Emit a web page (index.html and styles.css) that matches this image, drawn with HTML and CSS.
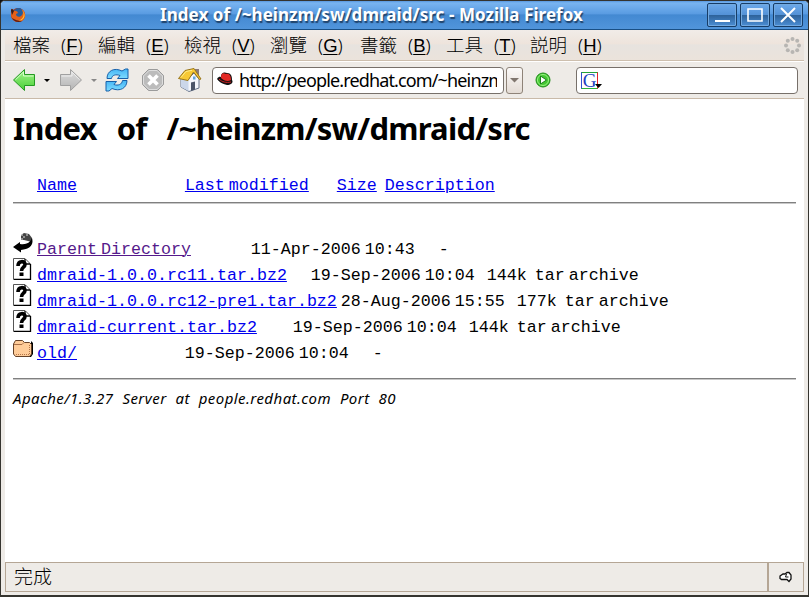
FILE: index.html
```html
<!DOCTYPE html>
<html lang="zh-Hant">
<head>
<meta charset="utf-8">
<title>Index of /~heinzm/sw/dmraid/src - Mozilla Firefox</title>
<link rel="stylesheet" href="styles.css">
</head>
<body>
<svg width="0" height="0" class="defs">
  <defs>
    <linearGradient id="green" x1="0" y1="0" x2="0" y2="1"><stop offset="0" stop-color="#a5f58c"/><stop offset="1" stop-color="#48cf36"/></linearGradient>
    <linearGradient id="grey" x1="0" y1="0" x2="0" y2="1"><stop offset="0" stop-color="#dedede"/><stop offset="1" stop-color="#b4b4b4"/></linearGradient>
    <linearGradient id="blue" x1="0" y1="0" x2="0" y2="1"><stop offset="0" stop-color="#45b5f5"/><stop offset="1" stop-color="#7fdcff"/></linearGradient>
    <symbol id="unknown" viewBox="0 0 20 22">
      <path d="M.5 .5H12L17.500 6V21.500H.5Z" fill="#fff" stroke="#555"/>
      <path d="M17.500 6V21.500H1M12 1V6H17" fill="none" stroke="#000" stroke-width="1.300"/>
      <path d="M5 8C5 2.500 12 2.500 12 6.500C12 9.500 8.500 9 8.500 13" fill="none" stroke="#000" stroke-width="3.600"/>
      <path d="M6.500 14.500h4v3.500h-4z"/>
    </symbol>
  </defs>
</svg>
<div class="window">
  <header class="titlebar">
    <svg class="app-icon" width="16" height="16" viewBox="0 0 16 16"><circle cx="8" cy="8" r="7" fill="#b83210"/><circle cx="8.500" cy="6" r="5" fill="#245d9c"/><path d="M1 4C1 0 3 2 4 4C6 3 8 5 8 6L6 7C6 10 10 11 12 8C14 5 12 3 11 2C17 4 16 12 12 14C7 17 0 13 1 4Z" fill="#e4601a"/><path d="M12 3C15 7 14 12 8 14C14 14 17 8 12 3Z" fill="#ffc435"/><path d="M1 4C1 1 3 2 4 4L2 8Z" fill="#351b1b"/><path d="M2 11C4 15 9 16 12 14C8 14 5 13 2 11Z" fill="#5b1c16"/></svg>
    <div class="caption">Index of /~heinzm/sw/dmraid/src - Mozilla Firefox</div>
    <div class="controls">
      <span class="control"><svg width="28" height="22"><path d="M7 17H22" stroke="#fff" stroke-width="2"/></svg></span>
      <span class="control"><svg width="28" height="22"><path d="M7 5H21V17H7Z" fill="none" stroke="#fff" stroke-width="1.600"/></svg></span>
      <span class="control"><svg width="28" height="22"><path d="M7 4L21 18M21 4L7 18" stroke="#fff" stroke-width="2"/></svg></span>
    </div>
  </header>
  <nav class="menubar">
    <span class="menu">檔案<span class="key">(<u>F</u>)</span></span>
    <span class="menu">編輯<span class="key">(<u>E</u>)</span></span>
    <span class="menu">檢視<span class="key">(<u>V</u>)</span></span>
    <span class="menu wide">瀏覽<span class="key">(<u>G</u>)</span></span>
    <span class="menu">書籤<span class="key">(<u>B</u>)</span></span>
    <span class="menu narrow">工具<span class="key">(<u>T</u>)</span></span>
    <span class="menu">説明<span class="key">(<u>H</u>)</span></span>
    <svg class="throbber" width="17" height="17" viewBox="0 0 17 17" fill="#b7b5b2"><circle cx="8.500" cy="2" r="2"/><circle cx="13.200" cy="3.800" r="2"/><circle cx="15" cy="8.500" r="2"/><circle cx="13.200" cy="13.200" r="2"/><circle cx="8.500" cy="15" r="2"/><circle cx="3.800" cy="13.200" r="2"/><circle cx="2" cy="8.500" r="2"/><circle cx="3.800" cy="3.800" r="2"/></svg>
  </nav>
  <div class="toolbar">
    <svg width="92" height="26" viewBox="0 0 92 26">
      <path d="M1.500 13L12.500 2.500V7.500H22.500V18.500H12.500V23.500Z" fill="url(#green)" stroke="#249a22"/>
      <path d="M3.500 12.700L11.500 5V9H21.500" fill="none" stroke="#d6ffca"/>
      <path d="M32 12h6l-3 3z"/>
      <path d="M69.500 13L58.500 2.500V7.500H48.500V18.500H58.500V23.500Z" fill="url(#grey)" stroke="#a0a0a0"/>
      <path d="M49.500 9H60V5L67.500 12.700" fill="none" stroke="#eee"/>
      <path d="M79 12h6l-3 3z" fill="#888"/>
    </svg>
    <svg class="reload" width="24" height="26" viewBox="0 0 24 26"><g fill="url(#blue)" stroke="#1760aa"><path d="M2 11.500C2 4 9 0 17 4L20.500 2L23 2V11.500H12.500L15 8.500C11 7 7 8 6.500 11.500Z"/><path d="M22 13.500C22 21 15 25 7 21.500L4 24L1 24V14.500H11.500L9 17.500C13 19 17 17.500 17.500 13.500Z"/></g></svg>
    <svg class="stop" width="24" height="26" viewBox="0 0 24 26"><path d="M7.500 2.500H16.500L22.500 8.500V17.500L16.500 23.500H7.500L1.500 17.500V8.500Z" fill="#bcbcbc" stroke="#9b9b9b"/><path d="M8 3.500H16L21.500 9V17L16 22.500H8L2.500 17V9Z" fill="none" stroke="#dedede"/><path d="M7.500 8.500L16.500 17.500M16.500 8.500L7.500 17.500" stroke="#fff" stroke-width="3.600"/></svg>
    <svg class="home" width="25" height="26" viewBox="0 0 25 26"><path d="M4 12L11 12L17 6L22 12V21L12 24.500L4 20Z" fill="#f3f5fa" stroke="#66738a"/><path d="M11.500 13V24L4 20V12Z" fill="#cbd7ea"/><path d="M14 15.500L18 14.500V22.500L14 24Z" fill="#4b5468"/><path d="M16 9.500h2.500v3H16z" fill="#63a5dc"/><path d="M18 2h4v7l-4-4z" fill="#8b7a79"/><path d="M1.500 11.500L8 3.500L17 1.500L24 12L22.500 12.500L16.500 5L11 13.500Z" fill="#f7c935" stroke="#98751a"/><path d="M4 10.500L9 4.500L15 3.300" stroke="#ffed8c" fill="none"/></svg>
    <div class="address">
      <svg width="17" height="16" viewBox="0 0 17 16"><path d="M0 7C2 4 3 5 4 5C4 0 8 0 10 1C15 1 15 6 15 8C17 11 13 13 10 13C5 12 2 10 0 7Z" fill="#131010"/><path d="M4 6C4 0 7 1 9 2C13 1 14 5 14 8C11 10 7 9 4 6Z" fill="#e32925"/><path d="M2 7C5 10 9 11 14 10" stroke="#d32022" fill="none"/></svg>
      <span>http://people.redhat.com/~heinzm</span>
    </div>
    <div class="drop"><svg width="10" height="6"><path d="M0 1h9L4.500 5.500z" fill="#80766e"/></svg></div>
    <svg class="go" width="16" height="16" viewBox="0 0 16 16"><circle cx="8" cy="8" r="7" fill="#43c832" stroke="#218c1b"/><circle cx="8" cy="8" r="5.500" fill="none" stroke="#9af184"/><path d="M5.500 4V12L11.500 8Z" fill="#fff" stroke="#1b811a"/></svg>
    <div class="search"><span class="engine">G</span><svg class="engine-arrow" width="8" height="5"><path d="M0 0h7L3.500 4z"/></svg></div>
  </div>
  <main class="page">
    <h1><span>Index</span> <span>of</span> <span>/~heinzm/sw/dmraid/src</span></h1>
    <div class="row head"><span class="icon"></span><pre><a href="#">Name</a>                           <a href="#">Last modified</a>       <a href="#">Size</a>  <a href="#">Description</a></pre></div>
    <hr>
    <div class="list">
      <div class="row"><svg class="icon" viewBox="0 0 20 22"><path d="M8 3L11 1L16 2L19 6L19 10L11 8L8 8Z" fill="#444"/><path d="M8 3h2M10 5h2M8 7h2M13 3h2" stroke="#ddd"/><path d="M0 15L7 10V12C13 13 17 11 19 6C21 13 17 17 8 18V20.500Z"/></svg><pre><a class="visited" href="#">Parent Directory</a>               11-Apr-2006 10:43      -</pre></div>
      <div class="row"><svg class="icon"><use href="#unknown"/></svg><pre><a href="#">dmraid-1.0.0.rc11.tar.bz2</a>      19-Sep-2006 10:04   144k  tar archive</pre></div>
      <div class="row"><svg class="icon"><use href="#unknown"/></svg><pre><a href="#">dmraid-1.0.0.rc12-pre1.tar.bz2</a> 28-Aug-2006 15:55   177k  tar archive</pre></div>
      <div class="row"><svg class="icon"><use href="#unknown"/></svg><pre><a href="#">dmraid-current.tar.bz2</a>         19-Sep-2006 10:04   144k  tar archive</pre></div>
      <div class="row"><svg class="icon" viewBox="0 0 20 22"><path d="M3 21H18L20 18V7L18 5V18L16 20Z"/><path d="M.5 8L2.500 4.500H9.500L11.500 6.500H16.500L18.500 8.500V18L16.500 20.500H2.500L.5 18Z" fill="#fc9" stroke="#654128"/><path d="M1 8.500H9L11 6.500" fill="none" stroke="#a96f46"/><path d="M3 18.500H16.500V9" fill="none" stroke="#b57548" stroke-dasharray="1 1"/></svg><pre><a href="#">old/</a>                           19-Sep-2006 10:04      -</pre></div>
    </div>
    <hr>
    <address>Apache/1.3.27 Server at people.redhat.com Port 80</address>
  </main>
  <footer class="status">
    <div class="message">完成</div>
    <div class="indicator"><svg width="13" height="12" viewBox="0 0 13 12"><path d="M1 5L4 3H6L8 1.500H10L12 4V8L10 10.500L8 8.500H2.500L1 7.500Z" fill="#fff" stroke="#111" stroke-width="1.300"/><path d="M7.500 3L6.500 6H9.500" fill="none" stroke="#111"/></svg></div>
  </footer>
</div>
</body>
</html>
```

FILE: styles.css
```css
* { box-sizing: border-box; }
html, body { margin: 0; }
body { width: 809px; height: 597px; overflow: hidden; background: #111; }
.defs { position: absolute; }
svg { display: block; flex: none; }

.window {
  display: flex; flex-direction: column;
  width: 809px; height: 597px;
  border: solid #35342f; border-width: 1px 1px 2px 1px;
  border-radius: 5px 5px 0 0;
  background: #eeebe7;
  font-family: "Noto Sans", "Noto Sans CJK TC", sans-serif;
  overflow: hidden;
}

.titlebar {
  display: flex; align-items: center; flex: none;
  height: 29px; padding: 0 5px 0 9px;
  border-bottom: 1px solid #194f85;
  background: linear-gradient(#5797df 0, #79b4f0 7%, #5a9ce2 45%, #4389d2 50%, #5195db 100%);
}
.caption {
  flex: 1; padding-left: 134px;
  color: #fff; font-size: 17px; font-weight: 700; line-height: 30px; letter-spacing: .06px;
  text-shadow: 1px 2px 1px #20436b; white-space: nowrap;
}
.controls { display: flex; gap: 3px; }
.control {
  width: 30px; height: 24px; border: 1px solid #173d67; border-radius: 2px;
  background: linear-gradient(#6ca9ea 0, #5492d7 48%, #2d6198 50%, #4b8ed5 100%);
  box-shadow: inset 0 0 0 1px #72a9e0;
}

.menubar {
  display: flex; align-items: center; flex: none;
  height: 31px; margin: 0 4px; padding-left: 8px;
  border-bottom: 1px solid #cdbfae;
  background: linear-gradient(#f1ece8 0, #eee4dc 45%, #e7e3df 50%, #ebe3db 100%);
  font-size: 18.500px; font-weight: 300;
}
.menu { display: flex; width: 86px; line-height: 30px; white-space: nowrap; }
.menu:first-child { width: 85px; }
.menu.wide { width: 90px; }
.menu.narrow { width: 84px; }
.key { margin-left: 11px; }
.key u { font-family: "Liberation Sans", sans-serif; font-weight: 400; text-underline-offset: 2px; }
.throbber { margin: 0 3px 0 auto; }

.toolbar {
  display: flex; align-items: center; flex: none;
  height: 38px; margin: 0 4px; padding-left: 7px;
  border-top: 1px solid #fff; border-bottom: 1px solid #c9baa9;
}
.reload { margin-left: 1px; }
.stop { margin-left: 12px; }
.home { margin-left: 12px; }
.address {
  display: flex; align-items: center; gap: 5px;
  width: 292px; height: 27px; margin-left: 10px; padding: 0 6px 0 4px;
  border: 1px solid #77706a; border-radius: 4px; background: #fff;
  font-size: 18px; letter-spacing: -.86px; white-space: nowrap;
}
.address span { flex: 1; min-width: 0; overflow: hidden; line-height: 25px; }
.drop {
  display: grid; place-items: center;
  width: 17px; height: 27px; margin-left: 2px;
  border: 1px solid #8e8378; border-radius: 3px;
  background: linear-gradient(#fbf9f8, #e4dcd5);
}
.go { margin-left: 12px; }
.search {
  display: flex; align-items: center;
  width: 222px; height: 27px; margin-left: 25px; padding-left: 4px;
  border: 1px solid #77706a; border-radius: 4px; background: #fff;
}
.engine {
  width: 17px; height: 17px; border: 1px solid;
  border-color: #24a138 #e6232a #2bb03c #3151d0;
  color: #1c3fc0; font: 19px/15px "Liberation Serif", serif; text-align: center;
}
.engine-arrow { margin: 12px 0 0 -3px; }

.page { flex: 1; min-height: 0; margin: 0 4px; padding: 0 8px; background: #fff; }
h1 {
  display: flex; gap: 20px;
  height: 69px; margin: 0; padding-top: 8px;
  font-size: 31px; line-height: 43px; letter-spacing: -.77px; white-space: nowrap;
}
.row { display: flex; height: 26px; }
.icon { flex: none; width: 20px; height: 22px; margin-right: 4px; }
pre {
  margin: 0; padding-top: 7px;
  font: 16.660px/21px "Liberation Mono", monospace; word-spacing: -6px;
}
a { color: #0000ee; text-decoration-thickness: 1px; }
.visited { color: #551a8b; }
hr { height: 2px; margin: 7px 0 0; border: 0; border-top: 1px solid #808080; border-bottom: 1px solid #c8c8c8; }
.head + hr { margin-top: 8px; }
.list { margin: 28px 0 16px; }
address { margin-top: 8px; font-size: 15px; line-height: 21px; letter-spacing: .45px; word-spacing: 4.500px; white-space: nowrap; }

.status {
  display: flex; flex: none;
  height: 30px; margin: 0 4px 3px;
  border: 1px solid #b5a695;
  font-size: 19px; font-weight: 300; line-height: 28px;
}
.message { flex: 1; padding-left: 8px; }
.indicator { display: grid; place-items: center; width: 36px; padding-right: 2px; border-left: 2px solid #b5a695; }
```
